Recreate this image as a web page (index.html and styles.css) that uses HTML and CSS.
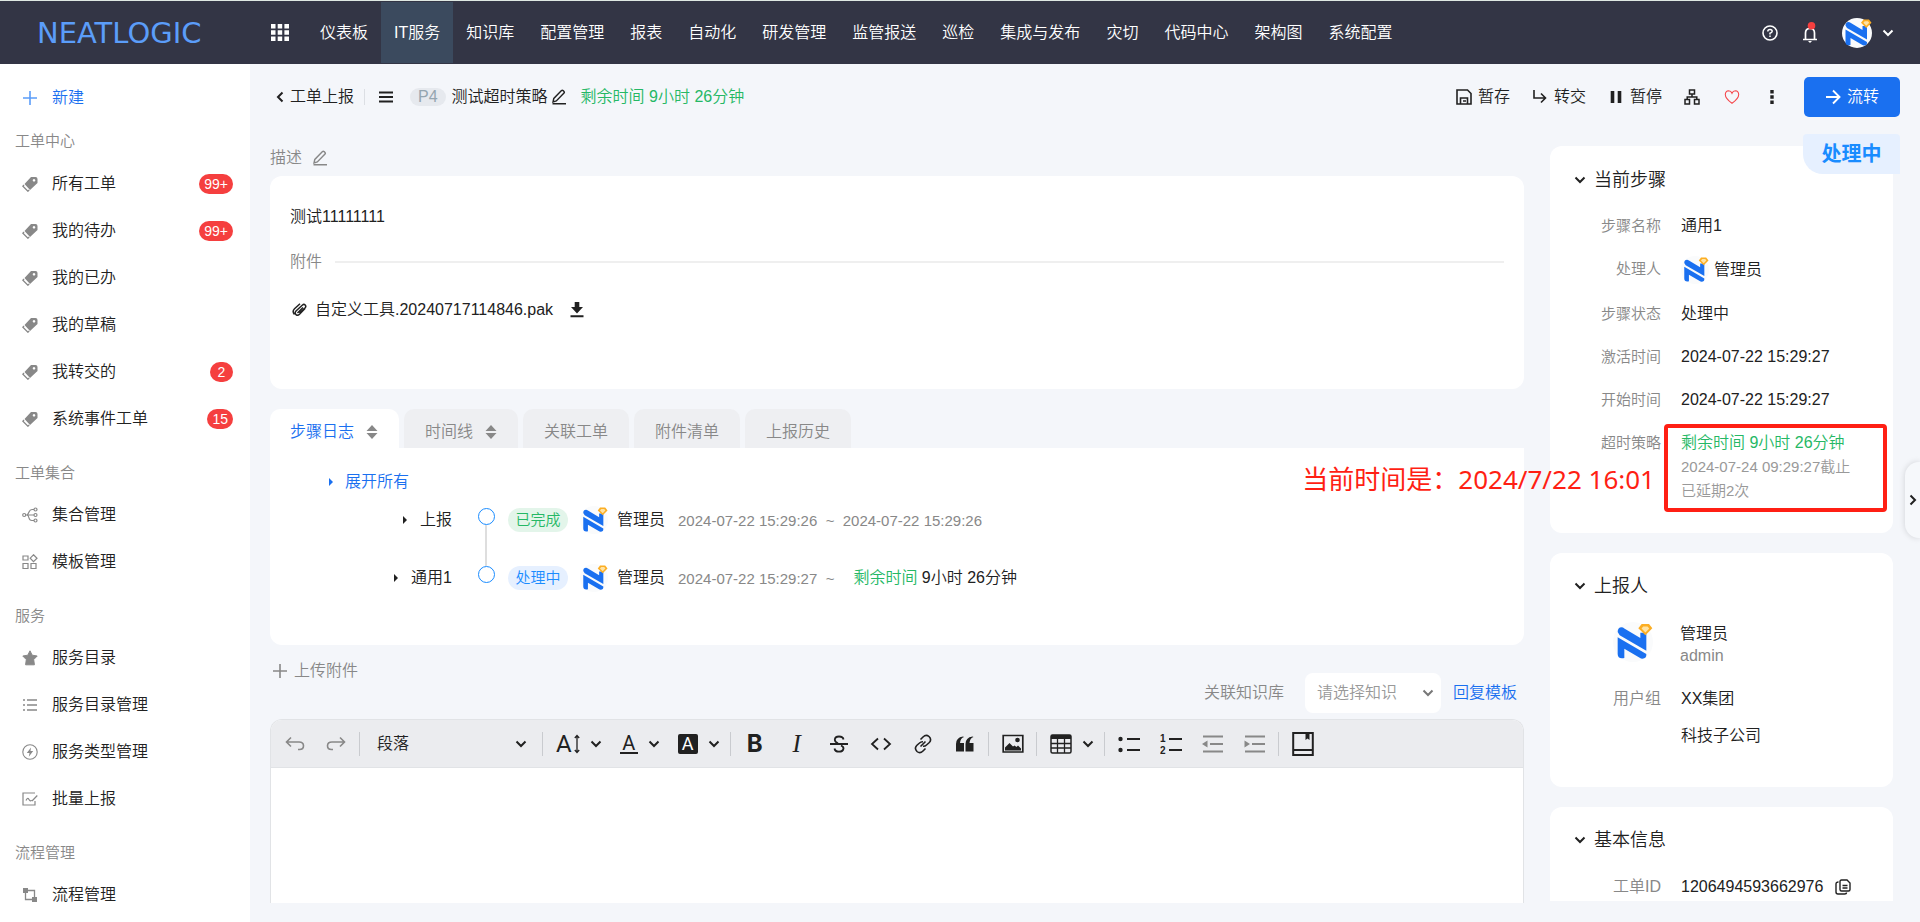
FILE: index.html
```html
<!DOCTYPE html>
<html lang="zh-CN">
<head>
<meta charset="utf-8">
<title>NEATLOGIC - IT服务</title>
<link rel="stylesheet" href="styles.css">
</head>
<body>
<svg class="sprite" aria-hidden="true">
  <symbol id="i-down" viewBox="0 0 12 12"><path d="M1.5 3.5 6 8l4.500-4.500" fill="none" stroke="currentColor" stroke-width="2"/></symbol>
  <symbol id="i-left" viewBox="0 0 12 12"><path d="M8.500 1.500 4 6l4.500 4.500" fill="none" stroke="currentColor" stroke-width="2"/></symbol>
  <symbol id="i-right" viewBox="0 0 12 12"><path d="M3.500 1.500 8 6l-4.500 4.500" fill="none" stroke="currentColor" stroke-width="2"/></symbol>
  <symbol id="i-tri" viewBox="0 0 6 10"><path d="M1 1l4 4-4 4z" fill="currentColor"/></symbol>
  <symbol id="i-sort" viewBox="0 0 12 16"><path d="M6 1l5.500 6H.5zM6 15l5.500-6H.5z" fill="currentColor"/></symbol>
  <symbol id="i-plus" viewBox="0 0 16 16"><path d="M8 1v14M1 8h14" stroke="currentColor" stroke-width="1.600"/></symbol>
  <symbol id="i-tag" viewBox="0 0 16 16"><path d="M9 1h4.500Q15.500 1 15.500 3V7L8 14 2.500 8zM12 3a1.300 1.300 0 1 0 .01 0z" fill="currentColor" fill-rule="evenodd"/><path d="M2 9 .9 10.200l5 5 1.300-1.200" fill="none" stroke="currentColor" stroke-width="1.300"/></symbol>
  <symbol id="i-nodes" viewBox="0 0 16 16"><g fill="none" stroke="currentColor" stroke-width="1.200"><circle cx="2.200" cy="8" r="1.500"/><circle cx="13.500" cy="2.500" r="1.500"/><circle cx="13.500" cy="8" r="1.500"/><circle cx="13.500" cy="13.500" r="1.500"/><path d="M3.700 8H12M12 2.500h-2Q8 2.500 7 5T5 8q1.500.5 2 3t3 2.500h2"/></g></symbol>
  <symbol id="i-blocks" viewBox="0 0 16 16"><g fill="none" stroke="currentColor" stroke-width="1.200"><path d="M1 2h5v4H1zM1 9.500h5v5H1zM9 9.500h5v5H9zM11.500.8 15 4.200l-3.500 3.500L8.200 4.200z"/></g></symbol>
  <symbol id="i-star" viewBox="0 0 16 16"><path d="M8 .8l2.200 4.400 5 .8-3.500 3.600.7 5.200H3.600l.7-5.200L.8 6l5-.8z" fill="currentColor" stroke="currentColor" stroke-linejoin="round"/></symbol>
  <symbol id="i-list" viewBox="0 0 16 16"><path d="M5 3h10M5 8h10M5 13h10M1 3h2M1 8h2M1 13h2" stroke="currentColor" stroke-width="1.300"/></symbol>
  <symbol id="i-bolt" viewBox="0 0 16 16"><circle cx="8" cy="8" r="7.200" fill="none" stroke="currentColor" stroke-width="1.100"/><path d="M9 3.500 4.800 9H7.500l-.7 3.700L11.200 7H8.500z" fill="currentColor"/></symbol>
  <symbol id="i-report" viewBox="0 0 16 16"><path d="M13 2H1v12h12v-4M15.300 4.500 10 10M4 9.500Q5.500 6 7 8.500T9.500 9" fill="none" stroke="currentColor" stroke-width="1.200"/></symbol>
  <symbol id="i-flow" viewBox="0 0 16 16"><path d="M1 1h5v5H1zM10 10h5v5h-5z" fill="currentColor"/><path d="M6 3.500h6.500V10M3.500 6v6.500H10" fill="none" stroke="currentColor" stroke-width="1.300"/></symbol>
  <symbol id="i-pencil" viewBox="0 0 16 16"><path d="M2 13l.8-3.600L10.500 1.600q.8-.7 1.600 0l.9.900q.7.800 0 1.600L5.300 12 2 13zM1.500 14.800H15" fill="none" stroke="currentColor" stroke-width="1.400"/></symbol>
  <symbol id="i-avatar" viewBox="0 0 30 30"><circle cx="15" cy="15" r="15" fill="#fafbfc"/><path d="M3.500 7.500Q3.500 4 6.500 4q1 0 2 .8l12 7.200V8h4.500v13.500L5 10z" fill="#1a70f0"/><path d="M3.500 11.500 25 24q.3 3.500-3 3.500-1 0-2-.7L8.500 20v7Q3.500 28 3.500 24z" fill="#1a70f0"/><path d="M21.500 1.500h5.500l2.500 3.200-5.200 5.300-5.300-5.300z" fill="#fcae23"/><path d="M22.700 3.300h3.200l1.300 1.500-2.900 3-2.900-3z" fill="#ffe3a4"/></symbol>
</svg>

<header class="topbar">
  <a class="logo" href="#">NEATLOGIC</a>
  <button class="apps" aria-label="应用"><svg viewBox="0 0 18 17"><path d="M0 0h4.500v4.500H0zM6.700 0h4.500v4.500H6.700zM13.400 0H18v4.500h-4.600zM0 6.200h4.500v4.500H0zM6.700 6.200h4.500v4.500H6.700zM13.400 6.200H18v4.500h-4.600zM0 12.400h4.500v4.500H0zM6.700 12.400h4.500v4.500H6.700zM13.400 12.400H18v4.500h-4.600z" fill="currentColor"/></svg></button>
  <nav class="nav">
    <a href="#">仪表板</a><a href="#" class="on">IT服务</a><a href="#">知识库</a><a href="#">配置管理</a><a href="#">报表</a><a href="#">自动化</a><a href="#">研发管理</a><a href="#">监管报送</a><a href="#">巡检</a><a href="#">集成与发布</a><a href="#">灾切</a><a href="#">代码中心</a><a href="#">架构图</a><a href="#">系统配置</a>
  </nav>
  <div class="tools">
    <button aria-label="帮助"><svg class="ic16" viewBox="0 0 16 16"><circle cx="8" cy="8" r="7" fill="none" stroke="currentColor" stroke-width="1.600"/><path d="M5.800 6.500q0-2 2.200-2t2.200 1.800Q10.200 7.500 8 8.300V9.500M8 10.500v1.600" fill="none" stroke="currentColor" stroke-width="1.500"/></svg></button>
    <button aria-label="通知"><svg class="bell" viewBox="0 0 16 22"><path d="M3.500 17v-6q0-4.500 4.500-4.500t4.500 4.500v6M1 17.500h14" fill="none" stroke="currentColor" stroke-width="1.700"/><path d="M6 19h4l-2 2z" fill="currentColor"/><circle cx="9.500" cy="3.800" r="3.800" fill="#f53f3f"/></svg></button>
    <button class="user" aria-label="用户"><svg class="ic30"><use href="#i-avatar"/></svg><svg class="ic12"><use href="#i-down"/></svg></button>
  </div>
</header>

<div class="shell">
  <aside class="side">
    <a class="new" href="#"><svg class="ic16"><use href="#i-plus"/></svg>新建</a>
    <h2>工单中心</h2>
    <a href="#"><svg class="ic16"><use href="#i-tag"/></svg>所有工单<b>99+</b></a>
    <a href="#"><svg class="ic16"><use href="#i-tag"/></svg>我的待办<b>99+</b></a>
    <a href="#"><svg class="ic16"><use href="#i-tag"/></svg>我的已办</a>
    <a href="#"><svg class="ic16"><use href="#i-tag"/></svg>我的草稿</a>
    <a href="#"><svg class="ic16"><use href="#i-tag"/></svg>我转交的<b>2</b></a>
    <a href="#"><svg class="ic16"><use href="#i-tag"/></svg>系统事件工单<b>15</b></a>
    <h2>工单集合</h2>
    <a href="#"><svg class="ic16"><use href="#i-nodes"/></svg>集合管理</a>
    <a href="#"><svg class="ic16"><use href="#i-blocks"/></svg>模板管理</a>
    <h2>服务</h2>
    <a href="#"><svg class="ic16"><use href="#i-star"/></svg>服务目录</a>
    <a href="#"><svg class="ic16"><use href="#i-list"/></svg>服务目录管理</a>
    <a href="#"><svg class="ic16"><use href="#i-bolt"/></svg>服务类型管理</a>
    <a href="#"><svg class="ic16"><use href="#i-report"/></svg>批量上报</a>
    <h2>流程管理</h2>
    <a href="#"><svg class="ic16"><use href="#i-flow"/></svg>流程管理</a>
  </aside>

  <main class="main">
    <div class="titlebar">
      <button class="back"><svg class="ic12"><use href="#i-left"/></svg>工单上报</button>
      <span class="vline"></span>
      <button class="burger" aria-label="菜单"><svg class="ic16" viewBox="0 0 16 16"><path d="M1 3.500h14M1 8h14M1 12.500h14" stroke="currentColor" stroke-width="1.800"/></svg></button>
      <span class="prio">P4</span>
      <h1>测试超时策略</h1>
      <button class="edit" aria-label="编辑标题"><svg class="ic16"><use href="#i-pencil"/></svg></button>
      <span class="green remain">剩余时间 9小时 26分钟</span>
      <div class="actions">
        <button><svg class="ic16" viewBox="0 0 16 16"><path d="M1 1h10.500L15 4.500V15H1zM4.500 15V9h7v6M7 12h3" fill="none" stroke="currentColor" stroke-width="1.600"/></svg>暂存</button>
        <button><svg class="ic16" viewBox="0 0 16 16"><path d="M2 1v8h11M9 4.500 13.500 9 9 13.500" fill="none" stroke="currentColor" stroke-width="1.600"/></svg>转交</button>
        <button><svg class="ic16" viewBox="0 0 16 16"><path d="M4.500 2v12M11.500 2v12" stroke="currentColor" stroke-width="3.600"/></svg>暂停</button>
        <button class="sq" aria-label="流程图"><svg class="ic16" viewBox="0 0 16 16"><path d="M5.500 1h5v4h-5zM1 10.500h4.500V15H1zM10.500 10.500H15V15h-4.500zM8 5v3M3.200 10.500V8h9.600v2.500" fill="none" stroke="currentColor" stroke-width="1.500"/></svg></button>
        <button class="sq red" aria-label="收藏"><svg class="ic16" viewBox="0 0 16 16"><path d="M8 14.300Q1.300 9.500 1.300 5.500 1.500 2 4.600 1.800 7 1.800 8 4.200 9 1.800 11.400 1.800 14.500 2 14.700 5.500 14.700 9.500 8 14.300z" fill="none" stroke="currentColor" stroke-width="1.100"/></svg></button>
        <button class="sq" aria-label="更多"><svg class="ic16" viewBox="0 0 16 16"><path d="M6.300 1h3.400v3.400H6.300zM6.300 6.300h3.400v3.400H6.300zM6.300 11.600h3.400V15H6.300z" fill="currentColor"/></svg></button>
        <button class="primary"><svg class="ic16" viewBox="0 0 16 16"><path d="M1 8h13.500M8 1.500 14.500 8 8 14.500" fill="none" stroke="currentColor" stroke-width="1.900"/></svg>流转</button>
      </div>
    </div>

    <div class="cols">
      <section class="left">
        <div class="cap">描述<button aria-label="编辑描述"><svg class="ic16"><use href="#i-pencil"/></svg></button></div>
        <div class="card desc">
          <p>测试11111111</p>
          <div class="divider">附件<hr></div>
          <div class="file"><svg class="ic16" viewBox="0 0 16 16"><path d="M13 6.500 7.500 12.300q-1.800 1.700-3.500.3-1.700-1.700 0-3.600L10.500 3q1.400-1.200 2.700 0 1.200 1.300 0 2.700L7.500 11M11 5.500 5.500 11M2.500 12.500Q-.2 9.500 2.500 6.800L8 1.800" fill="none" stroke="currentColor" stroke-width="1.500"/></svg><a href="#">自定义工具.20240717114846.pak</a><button aria-label="下载"><svg class="ic16" viewBox="0 0 16 16"><path d="M5.700 0h4.600v5H14L8 11.500 2 5h3.700zM1.500 13.300h13v1.900h-13z" fill="currentColor"/></svg></button></div>
        </div>

        <div class="tabs">
          <button class="on">步骤日志<svg class="sort"><use href="#i-sort"/></svg></button>
          <button>时间线<svg class="sort"><use href="#i-sort"/></svg></button>
          <button>关联工单</button>
          <button>附件清单</button>
          <button>上报历史</button>
        </div>
        <div class="panel">
          <button class="expand"><svg class="tri"><use href="#i-tri"/></svg>展开所有</button>
          <div class="log line">
            <button class="step"><svg class="tri"><use href="#i-tri"/></svg>上报</button>
            <i class="dot"></i>
            <span class="pill ok">已完成</span>
            <svg class="ic28"><use href="#i-avatar"/></svg>
            <span class="who">管理员</span>
            <span class="time">2024-07-22 15:29:26 &nbsp;~&nbsp; 2024-07-22 15:29:26</span>
          </div>
          <div class="log">
            <button class="step"><svg class="tri"><use href="#i-tri"/></svg>通用1</button>
            <i class="dot"></i>
            <span class="pill">处理中</span>
            <svg class="ic28"><use href="#i-avatar"/></svg>
            <span class="who">管理员</span>
            <span class="time">2024-07-22 15:29:27 &nbsp;~</span>
            <span class="left-time"><span class="green">剩余时间</span> 9小时 26分钟</span>
          </div>
        </div>

        <button class="upload"><svg class="ic16"><use href="#i-plus"/></svg>上传附件</button>
        <div class="kb">
          <label for="kb">关联知识库</label>
          <span class="sel"><select id="kb"><option>请选择知识</option></select><svg class="ic12"><use href="#i-down"/></svg></span>
          <a href="#">回复模板</a>
        </div>

        <div class="editor">
          <div class="bar">
            <button class="dim" aria-label="撤销"><svg class="ic22" viewBox="0 0 22 22"><path d="M7 4.500 2.500 9 7 13.500M2.500 9H15q4.500 0 4.500 3.700T15.500 16.500H14" fill="none" stroke="currentColor" stroke-width="1.600"/></svg></button>
            <button class="dim redo" aria-label="重做"><svg class="ic22" viewBox="0 0 22 22"><path d="M15 4.500 19.500 9 15 13.500M19.500 9H7Q2.500 9 2.500 12.700T6.500 16.500H8" fill="none" stroke="currentColor" stroke-width="1.600"/></svg></button>
            <span class="sep"></span>
            <span class="sel para"><select aria-label="段落格式"><option>段落</option></select><svg class="ic12"><use href="#i-down"/></svg></span>
            <span class="sep"></span>
            <button class="dd" aria-label="字号"><span class="glyph big">A</span><svg class="updown" viewBox="0 0 6 20"><path d="M3 1.500v17M.8 4 3 1.500 5.200 4M.8 16 3 18.500 5.200 16" fill="none" stroke="currentColor" stroke-width="1.300"/></svg><svg class="ic12"><use href="#i-down"/></svg></button>
            <button class="dd" aria-label="字体颜色"><span class="glyph under">A</span><svg class="ic12"><use href="#i-down"/></svg></button>
            <button class="dd" aria-label="背景颜色"><span class="glyph box">A</span><svg class="ic12"><use href="#i-down"/></svg></button>
            <span class="sep"></span>
            <button class="tb bold" aria-label="粗体">B</button>
            <button class="tb italic" aria-label="斜体">I</button>
            <button class="tb" aria-label="删除线"><svg class="ic22" viewBox="0 0 22 22"><path d="M15.500 6.500Q15 3.500 11 3.500T6.800 6.800q0 2.200 3.200 3.500M2 11h18M13 12.500q2.500 1 2.500 3-.5 3.200-4.500 3.200T6.500 15.500" fill="none" stroke="currentColor" stroke-width="1.800"/></svg></button>
            <button class="tb" aria-label="代码"><svg class="ic22" viewBox="0 0 22 22"><path d="M8 5.500 2 11l6 5.500M14 5.500l6 5.500-6 5.500" fill="none" stroke="currentColor" stroke-width="1.800"/></svg></button>
            <button class="tb" aria-label="链接"><svg class="ic22" viewBox="0 0 22 22"><path d="M8.500 6.500 11 4q3-3 6-.5 3 3 .3 6L14.500 12q-1.500 1.500-3.500 1.300M13.500 15.500 11 18q-3 3-6 .5-3-3-.3-6L7.500 10q1.500-1.500 3.500-1.300M8.500 13.500l5-5" fill="none" stroke="currentColor" stroke-width="1.600"/></svg></button>
            <button class="tb" aria-label="引用"><svg class="ic22" viewBox="0 0 22 22"><path d="M10 4Q6.500 5 6 10h4v8.500H2V11Q2 4.500 9 3.500zM19.500 4Q16 5 15.500 10h4v8.500h-8V11q0-6.500 7-7.500z" fill="currentColor"/></svg></button>
            <span class="sep"></span>
            <button class="tb" aria-label="图片"><svg class="ic22" viewBox="0 0 22 22"><path d="M1.200 2.500h19.600v16.500H1.200z" fill="none" stroke="currentColor" stroke-width="1.700"/><circle cx="15.500" cy="7" r="2.300" fill="currentColor"/><path d="M3 17.500v-3L7.500 10l3.500 3.500 1.500-1 2 1.500 1.500-1.500 3 3v2z" fill="currentColor"/></svg></button>
            <span class="sep"></span>
            <button class="dd" aria-label="表格"><svg class="ic22" viewBox="0 0 22 22"><rect x="1" y="2" width="20" height="18" rx="1.500" fill="none" stroke="currentColor" stroke-width="1.500"/><path d="M1 2h20v4H1z" fill="currentColor"/><path d="M1 10.500h20M1 15h20M7.500 5v15M14.500 5v15" stroke="currentColor" stroke-width="1.300"/></svg><svg class="ic12"><use href="#i-down"/></svg></button>
            <span class="sep"></span>
            <button class="tb" aria-label="项目列表"><svg class="ic22" viewBox="0 0 22 22"><path d="M9 6h13M9 17h13" stroke="currentColor" stroke-width="2"/><circle cx="2.500" cy="6" r="2.200" fill="currentColor"/><circle cx="2.500" cy="17" r="2.200" fill="currentColor"/></svg></button>
            <button class="tb" aria-label="编号列表"><svg class="ic22" viewBox="0 0 22 22"><path d="M9 6h13M9 17h13" stroke="currentColor" stroke-width="2"/><text x="0" y="9" class="num">1</text><text x="0" y="21" class="num">2</text></svg></button>
            <button class="tb dim" aria-label="减少缩进"><svg class="ic22" viewBox="0 0 22 22"><path d="M1 3.500h20M8 11h13M1 18.500h20" stroke="currentColor" stroke-width="1.800"/><path d="M5.500 7.500v7L0 11z" fill="currentColor"/></svg></button>
            <button class="tb dim" aria-label="增加缩进"><svg class="ic22" viewBox="0 0 22 22"><path d="M1 3.500h20M8 11h13M1 18.500h20" stroke="currentColor" stroke-width="1.800"/><path d="M.5 7.500v7L6 11z" fill="currentColor"/></svg></button>
            <span class="sep"></span>
            <button class="tb" aria-label="知识"><svg class="book" viewBox="0 0 22 24"><path d="M1.200 1h19.600v22H1.200zM1.200 18h19.600" fill="none" stroke="currentColor" stroke-width="2"/><path d="M13.500 1h4v7l-2-1.500-2 1.500z" fill="currentColor"/></svg></button>
          </div>
          <textarea aria-label="回复内容"></textarea>
        </div>
      </section>

      <section class="right">
        <div class="card info first">
          <span class="state">处理中</span>
          <h3><svg class="ic12"><use href="#i-down"/></svg>当前步骤</h3>
          <dl class="steps">
            <dt>步骤名称</dt><dd>通用1</dd>
            <dt>处理人</dt><dd class="person"><svg class="ic28"><use href="#i-avatar"/></svg>管理员</dd>
            <dt>步骤状态</dt><dd>处理中</dd>
            <dt>激活时间</dt><dd>2024-07-22 15:29:27</dd>
            <dt>开始时间</dt><dd>2024-07-22 15:29:27</dd>
            <dt>超时策略</dt><dd><span class="green">剩余时间 9小时 26分钟</span><small>2024-07-24 09:29:27截止</small><small>已延期2次</small></dd>
          </dl>
          <div class="mark"></div>
          <div class="note">当前时间是：2024/7/22 16:01</div>
        </div>
        <div class="card info">
          <h3><svg class="ic12"><use href="#i-down"/></svg>上报人</h3>
          <div class="reporter">
            <svg class="ic40"><use href="#i-avatar"/></svg>
            <div>管理员<span>admin</span></div>
          </div>
          <dl class="group">
            <dt>用户组</dt><dd>XX集团</dd><dd>科技子公司</dd>
          </dl>
        </div>
        <div class="card info">
          <h3><svg class="ic12"><use href="#i-down"/></svg>基本信息</h3>
          <dl class="group base">
            <dt>工单ID</dt><dd>1206494593662976<button aria-label="复制"><svg class="ic16" viewBox="0 0 16 16"><path d="M6.500 1H12l3 3v6.500q0 1.500-1.500 1.500h-7Q5 12 5 10.500v-8Q5 1 6.500 1zM3.500 3Q1 3 1 5v8q0 2 2 2h6.500q2 0 2-1.500M7.500 6.500h5M7.500 9h5" fill="none" stroke="currentColor" stroke-width="1.400"/></svg></button></dd>
          </dl>
        </div>
      </section>
    </div>
    <button class="handle" aria-label="收起"><svg class="ic12"><use href="#i-right"/></svg></button>
  </main>
</div>
</body>
</html>
```

FILE: styles.css
```css
* { box-sizing: border-box; }
body {
  margin: 0;
  height: 100vh;
  display: flex;
  flex-direction: column;
  overflow: hidden;
  background: #f4f6fa;
  color: #212121;
  font: 350 16px/24px "Liberation Sans", "Noto Sans CJK SC", sans-serif;
}
button {
  display: inline-flex;
  align-items: center;
  border: 0;
  padding: 0;
  background: none;
  color: inherit;
  font: inherit;
  cursor: pointer;
}
a { color: inherit; text-decoration: none; }
h1, h2, h3, p, dl, dd { margin: 0; font-size: 16px; font-weight: inherit; }
svg { flex: none; display: block; }
.sprite { position: absolute; width: 0; height: 0; }
.ic12 { width: 12px; height: 12px; }
.ic16 { width: 16px; height: 16px; }
.ic22 { width: 22px; height: 22px; }
.ic28 { width: 28px; height: 28px; }
.ic30 { width: 30px; height: 30px; }
.ic40 { width: 40px; height: 40px; }
.green { color: #25b865; }
.red { color: #f5474b; }

/* top bar */
.topbar {
  flex: none;
  display: flex;
  align-items: center;
  height: 64px;
  padding: 0 26px 0 37px;
  border-top: 1px solid #dfe8e2;
  background: #333545;
  color: #fff;
}
.logo {
  width: 234px;
  color: #5b9df9;
  font-family: "DejaVu Sans", sans-serif;
  font-size: 29px;
  font-weight: 400;
}
.apps { width: 36px; }
.apps svg { width: 18px; height: 17px; }
.nav { display: flex; flex: 1; }
.nav a { padding: 1px 13px 0; line-height: 60px; white-space: nowrap; }
.nav .on { background: #3b4a5e; }
.tools { display: flex; align-items: center; gap: 24px; }
.bell { width: 16px; height: 22px; }
.user { gap: 10px; }

/* side menu */
.shell { flex: 1; display: flex; min-height: 0; }
.side { flex: none; width: 250px; background: #fff; overflow: hidden; }
.side a {
  display: flex;
  align-items: center;
  gap: 14px;
  height: 47px;
  padding: 0 17px 0 22px;
}
.side svg { color: #888; }
.side .new { height: 59px; padding-top: 8px; color: #1a70f0; }
.side .new svg { color: #5b9df9; }
.side h2 {
  margin-top: 13px;
  padding-left: 15px;
  color: #888;
  font-size: 15px;
  line-height: 36px;
}
.side .new + h2 { margin: 0 0 1px; }
.side b {
  margin-left: auto;
  padding: 0 5px;
  min-width: 23px;
  border-radius: 10px;
  background: #f53f3f;
  color: #fff;
  font-size: 14px;
  font-weight: 400;
  line-height: 20px;
  text-align: center;
}

/* title bar */
.main {
  position: relative;
  flex: 1;
  min-width: 0;
  display: flex;
  flex-direction: column;
  padding: 0 27px 19px 20px;
}
.titlebar { display: flex; align-items: center; height: 66px; margin-right: -7px; white-space: nowrap; }
.back { gap: 4px; padding-left: 4px; }
.vline { width: 1px; height: 16px; margin: 0 13px 0 10px; background: #dcdfe4; }
.prio {
  margin: 0 6px 0 16px;
  padding: 0 8px;
  border-radius: 9px;
  background: #e6e9ee;
  color: #94a5b0;
  line-height: 18px;
}
.edit { margin: 0 14px 0 3px; }
.actions { display: flex; align-items: center; margin-left: auto; gap: 22px; }
.actions button { gap: 6px; }
.actions .sq { margin-right: 2px; }
.actions .primary {
  height: 40px;
  padding: 0 21px;
  border-radius: 5px;
  background: #1a70f0;
  color: #fff;
}

/* columns */
.cols { flex: 1; min-height: 0; display: flex; gap: 26px; }
.left { flex: 1; min-width: 0; display: flex; flex-direction: column; padding-top: 16px; }
.right { flex: none; width: 343px; display: flex; flex-direction: column; gap: 20px; padding-top: 16px; margin-bottom: 2px; min-height: 0; }
.card { background: #fff; border-radius: 12px; }
.cap { display: flex; align-items: flex-start; gap: 10px; height: 30px; color: #888; }
.cap button { height: 24px; }
.desc { height: 213px; padding: 29px 20px; }
.divider { display: flex; align-items: center; gap: 13px; margin-top: 21px; color: #888; }
.divider hr { flex: 1; margin: 0; border: 0; height: 2px; background: #efefef; }
.file { display: flex; align-items: center; gap: 7px; margin: 24px 0 0 2px; }
.file button { margin-left: 9px; }

.tabs { display: flex; gap: 5px; margin-top: 20px; }
.tabs button {
  gap: 12px;
  height: 39px;
  padding: 6px 21px 0;
  border-radius: 10px 10px 0 0;
  background: #eeeff2;
  color: #888;
}
.tabs .on { padding-left: 20px; background: #fff; color: #1a70f0; }
.sort { width: 12px; height: 16px; color: #888; }
.panel { flex: none; height: 197px; padding: 22px 20px; background: #fff; border-radius: 0 0 12px 12px; }
.tri { width: 6px; height: 10px; }
.expand { gap: 11px; margin-left: 38px; color: #1a70f0; }
.log { display: flex; align-items: center; height: 58px; }
.expand + .log { margin-top: -3px; }
.step { width: 162px; justify-content: flex-end; gap: 12px; }
.dot {
  position: relative;
  width: 17px;
  height: 17px;
  margin: 0 13px 8px 26px;
  border: 1px solid #1a8cff;
  border-radius: 50%;
}
.line .dot::after {
  content: "";
  position: absolute;
  top: 16px;
  left: 6px;
  width: 2px;
  height: 41px;
  background: #dedede;
}
.pill {
  width: 60px;
  margin-right: 12px;
  border-radius: 12px;
  background: #e6f0ff;
  color: #1a8cff;
  font-size: 15px;
  line-height: 24px;
  text-align: center;
}
.pill.ok { background: #e3f5ea; color: #25b865; }
.who { margin: 0 13px 0 9px; }
.time { padding-top: 2px; color: #888; font-size: 15px; }
.left-time { margin-left: 19px; }

.upload { align-self: flex-start; gap: 6px; margin: 14px 0 0 2px; color: #888; }
.kb { display: flex; align-items: center; gap: 12px; align-self: flex-end; height: 40px; margin: -10px 7px 6px 0; }
.kb label { color: #888; margin-right: 9px; }
.kb a { color: #1a70f0; }
.sel { position: relative; display: flex; align-items: center; }
.sel svg { position: absolute; right: 7px; pointer-events: none; color: #777; }
select {
  appearance: none;
  border: 0;
  background: none;
  color: inherit;
  font: inherit;
  width: 100%;
}
.kb select { width: 136px; height: 40px; padding: 0 12px; border-radius: 8px; background: #fff; color: #999; }

.editor {
  flex: 1;
  min-height: 0;
  display: flex;
  flex-direction: column;
  border: 1px solid #e1e3e6;
  border-bottom: 0;
  border-radius: 12px 12px 0 0;
  overflow: hidden;
  background: #fff;
}
.bar { flex: none; display: flex; align-items: center; height: 48px; padding-left: 13px; border-bottom: 1px solid #e1e3e6; background: #ebecef; }
.bar .dim { color: #888; }
.bar .redo { margin-left: 19px; }
.sep { width: 1px; height: 24px; margin: 0 13px 0 12px; background: #c9cbcf; }
.para { width: 157px; }
.para select { padding: 0 4px; }
.para svg { color: #212121; right: 3px; }
.dd { gap: 10px; margin-right: 18px; }
.dd + .sep { margin-left: -8px; }
.glyph { font-family: Roboto, sans-serif; font-weight: 400; text-align: center; }
.big { font-size: 24px; margin-right: -8px; }
.updown { width: 6px; height: 20px; }
.under { width: 18px; font-size: 20px; line-height: 18px; border-bottom: 2px solid #212121; }
.box { width: 20px; border-radius: 2px; background: #212121; color: #fff; font-size: 18px; line-height: 20px; }
.tb { width: 22px; margin-right: 20px; justify-content: center; }
.tb + .sep { margin-left: -8px; }
.bold { font-family: Inter, sans-serif; font-size: 24px; font-weight: 700; }
.italic { font-family: "Liberation Serif", serif; font-size: 25px; font-style: italic; }
.num { font: 700 10px "Liberation Sans", sans-serif; fill: currentColor; }
.book { width: 22px; height: 24px; }
textarea { flex: 1; border: 0; padding: 16px; resize: none; outline: 0; font: inherit; }

/* info cards */
.info { position: relative; flex: none; padding: 20px 22px 39px 24px; }
.info:last-child { flex: 1; min-height: 0; padding-bottom: 0; border-radius: 12px 12px 0 0; }
.info h3 { display: flex; align-items: center; gap: 8px; font-size: 18px; line-height: 26px; }
.steps, .group { display: grid; grid-template-columns: 87px 1fr; column-gap: 20px; }
.steps { margin-top: 21px; row-gap: 19px; }
dt { color: #888; font-size: 15px; text-align: right; }
.person { display: flex; align-items: center; gap: 5px; height: 26px; }
small { display: block; color: #999; font-size: 15px; }
.first { height: 387px; padding-top: 21px; }
.state {
  position: absolute;
  top: -12px;
  right: -7px;
  width: 97px;
  border-radius: 4px 4px 0 20px;
  background: #e6f0ff;
  color: #1a8cff;
  font-size: 20px;
  font-weight: 700;
  line-height: 40px;
  text-align: center;
}
.mark {
  position: absolute;
  top: 278px;
  right: 6px;
  width: 223px;
  height: 88px;
  border: 4px solid #ff1f14;
  border-radius: 4px;
}
.note {
  position: absolute;
  top: 314px;
  right: 238px;
  color: #ff1f14;
  font: 400 26px/38px "Noto Sans", "Noto Sans CJK SC", sans-serif;
  white-space: nowrap;
}
.reporter { display: flex; gap: 27px; margin: 23px 0 20px 39px; }
.reporter div { padding-top: 1px; line-height: 22px; }
.reporter span { display: block; color: #888; }
.group { row-gap: 13px; }
.group dt { font-size: 16px; }
.group dd { grid-column: 2; display: flex; align-items: center; gap: 12px; }
.base { margin-top: 22px; }

.handle {
  position: absolute;
  right: 0;
  top: 398px;
  width: 15px;
  height: 76px;
  justify-content: center;
  border-radius: 14px 0 0 14px;
  background: #f6f8fb;
  box-shadow: 0 0 6px rgba(0, 0, 0, 0.15);
}
```
